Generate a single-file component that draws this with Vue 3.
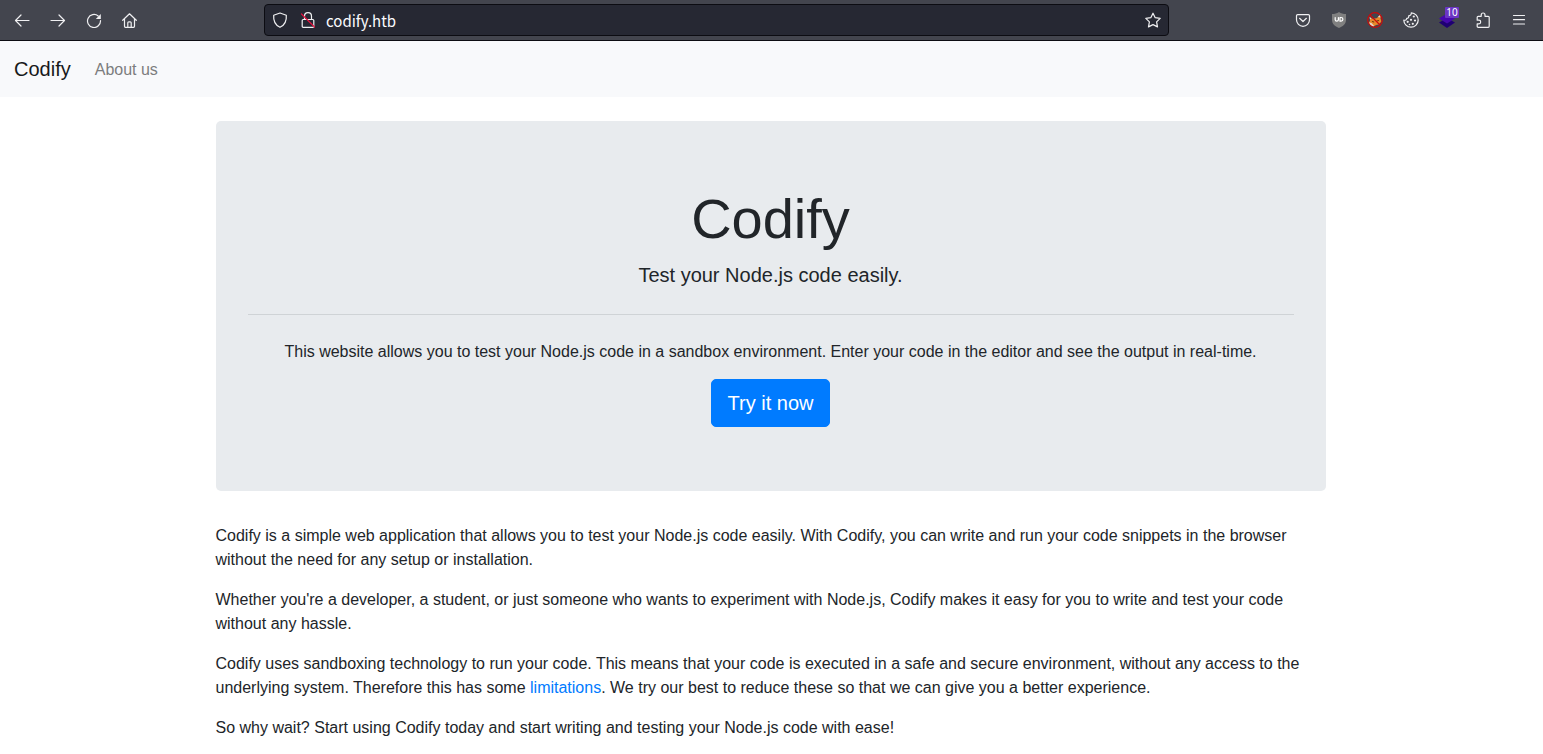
<template>
  <div class="page">
    <header class="toolbar">
      <div class="tools">
        <button type="button" aria-label="Back">
          <svg viewBox="0 0 16 16"><path d="M15 8.500H1.500M7 3 1.500 8.500 7 14" /></svg>
        </button>
        <button type="button" aria-label="Forward">
          <svg viewBox="0 0 16 16"><path d="M1 8.500h13.500M9 3l5.500 5.500L9 14" /></svg>
        </button>
        <button type="button" aria-label="Reload">
          <svg viewBox="0 0 16 16">
            <path d="M14.500 8.500A6.500 6.500 0 1 1 12.200 4" />
            <path class="solid" d="M14.800 2v5h-5z" />
          </svg>
        </button>
        <button type="button" aria-label="Home">
          <svg viewBox="0 0 16 16">
            <path d="M.7 8.300 7.500 1.800l6.800 6.500M2.500 7v7.300q0 1 1 1h8q1 0 1-1V7M5.800 15v-4.200q0-1 1-1h1.400q1 0 1 1V15" />
          </svg>
        </button>
      </div>

      <div class="urlbar">
        <svg viewBox="0 0 16 16">
          <path d="M8 1 14.300 3.200c.5 5.800-1.300 9.700-6.300 12.100C3 12.900 1.200 9 1.700 3.200z" />
        </svg>
        <svg class="lock" viewBox="0 0 16 16">
          <path d="M4.500 7.500V4.200a3.500 3.500 0 0 1 7 0v3.300M3.200 7.500h9.600q1 0 1 1v5.800q0 1-1 1H3.200q-1 0-1-1V8.500q0-1 1-1z" />
          <path class="slash" d="M1.500 2 14.500 15" />
        </svg>
        <input v-model="url" type="text" aria-label="Address" spellcheck="false" />
        <button type="button" class="star" aria-label="Bookmark this page">
          <svg viewBox="0 0 16 16">
            <path d="m8 1.200 2.200 4.500 5 .7-3.600 3.500.9 5L8 12.600l-4.500 2.300.9-5L.8 6.400l5-.7z" />
          </svg>
        </button>
      </div>

      <div class="tools">
        <button type="button" aria-label="Save to Pocket">
          <svg viewBox="0 0 16 16">
            <path d="M2.700 2.600h10.600q1.200 0 1.200 1.200v4a6.500 6.500 0 0 1-13 0v-4q0-1.200 1.200-1.200z" />
            <path d="M4.600 6.300 8 9.500l3.400-3.200" />
          </svg>
        </button>
        <button type="button" aria-label="Ad blocker">
          <svg viewBox="0 0 16 16">
            <path class="shield" d="M8 0c2 1.400 4.300 2 7 2v6c0 3.800-2.800 6.200-7 8-4.200-1.800-7-4.200-7-8V2c2.700 0 5-.6 7-2z" />
            <path class="shield-mark" d="M4.200 5.500v2.300q0 1.400 1.600 1.400t1.600-1.400V5.500M9 5.500h1q1.900 0 1.900 1.800T10 9.200H9z" />
          </svg>
        </button>
        <button type="button" aria-label="Proxy switcher">
          <svg viewBox="0 0 16 16">
            <path class="fox" d="m3 5.500 2.500 1.300 4-.6L13.500 3v3.500l1 3-2.800 3-2.700.5-2.300 1.500-3-1L2 10.800l1-2.300z" />
            <path class="fox-light" d="m2 10.500 2.500.5 2.500 2.700-.5 1-3-1.200zM10.800 5 13.500 2.500l-.2 3zM2.500 5l2 1.300-1.500 1.200z" />
            <path class="fox-dark" d="m5.500 9.500 1.200.5M10 9l1.500-.5" />
            <circle class="ban" cx="8" cy="8" r="7.300" />
            <path class="ban" d="m3 3 10 10" />
          </svg>
        </button>
        <button type="button" aria-label="Cookie editor">
          <svg viewBox="0 0 16 16">
            <path d="M8.300.8a7.200 7.200 0 1 1-7.500 7.400c1.700.3 2.900-.5 2.900-1.900C5.300 6.200 6 5.100 5.700 3.900 7.500 3.700 8.500 2.400 8.300.8z" />
            <g class="solid">
              <circle cx="10.800" cy="4.500" r="1.100" />
              <circle cx="8" cy="7.800" r="1.100" />
              <circle cx="12" cy="8.500" r="1.100" />
              <circle cx="4.700" cy="9.800" r="1.100" />
              <circle cx="9.800" cy="11.800" r="1.100" />
              <circle cx="6.500" cy="12.500" r=".8" />
            </g>
          </svg>
        </button>
        <button type="button" class="has-badge" aria-label="Technology profiler">
          <svg viewBox="0 0 16 16">
            <path class="layer-low" d="m0 10.500 8-4.500 8 4.500L8 16z" />
            <path class="layer-top" d="m0 6.500 8-5 8 5-8 5z" />
          </svg>
          <span class="badge">10</span>
        </button>
        <button type="button" aria-label="Extensions">
          <svg viewBox="0 0 16 16">
            <path d="M2.200 5.300q0-1 1-1h3V2.900a1.900 1.900 0 0 1 3.800 0v1.400h3.200q1 0 1 1v9q0 1-1 1h-10q-1 0-1-1v-2.500h1.700a1.800 1.800 0 0 0 0-3.600H2.200z" />
          </svg>
        </button>
        <button type="button" aria-label="Menu">
          <svg viewBox="0 0 16 16"><path d="M2.500 3.500h11M2.500 7.700h11M2.500 12h11" /></svg>
        </button>
      </div>
    </header>

    <nav class="navbar">
      <a href="#" class="brand">Codify</a>
      <a href="#about" class="nav-link">About us</a>
    </nav>

    <main class="container">
      <section class="jumbotron">
        <h1>Codify</h1>
        <p class="lead">Test your Node.js code easily.</p>
        <hr />
        <p>
          This website allows you to test your Node.js code in a sandbox environment. Enter your
          code in the editor and see the output in real-time.
        </p>
        <a href="#editor" class="btn">Try it now</a>
      </section>

      <p>
        Codify is a simple web application that allows you to test your Node.js code easily. With
        Codify, you can write and run your code snippets in the browser without the need for any
        setup or installation.
      </p>
      <p>
        Whether you're a developer, a student, or just someone who wants to experiment with
        Node.js, Codify makes it easy for you to write and test your code without any hassle.
      </p>
      <p>
        Codify uses sandboxing technology to run your code. This means that your code is executed
        in a safe and secure environment, without any access to the underlying system. Therefore
        this has some <a href="#limitations">limitations</a>. We try our best to reduce these so
        that we can give you a better experience.
      </p>
      <p>
        So why wait? Start using Codify today and start writing and testing your Node.js code with
        ease!
      </p>
    </main>
  </div>
</template>

<script setup>
import { ref } from "vue";

const url = ref("codify.htb");
</script>

<style>
body {
  margin: 0;
  background: #fff;
}
</style>

<style scoped>
.page,
.page * {
  box-sizing: border-box;
}

.page {
  color: #212529;
  font-family: "Liberation Sans", Arial, sans-serif;
  font-size: 16px;
  line-height: 24px;
}

/* Browser toolbar */
.toolbar {
  display: flex;
  align-items: center;
  height: 41px;
  padding: 0 6px 0 4px;
  background: #43454e;
  border-bottom: 1px solid #0c0c12;
}

.tools {
  display: flex;
}

.toolbar button {
  display: flex;
  align-items: center;
  justify-content: center;
  width: 36px;
  height: 32px;
  padding: 0;
  border: 0;
  background: none;
  cursor: pointer;
}

.toolbar svg {
  flex: none;
  width: 16px;
  height: 16px;
  fill: none;
  stroke: #f0f0f2;
  stroke-width: 1.2;
  stroke-linecap: round;
  stroke-linejoin: round;
}

.toolbar .solid {
  fill: #f0f0f2;
  stroke: none;
}

.urlbar {
  display: flex;
  flex: 1;
  align-items: center;
  min-width: 0;
  height: 32px;
  margin: 0 116px;
  padding-left: 7px;
  background: #262833;
  border: 1px solid #0c0c12;
  border-radius: 4px;
}

.urlbar .lock {
  margin: 0 10px 0 12px;
}

.urlbar input {
  flex: 1;
  min-width: 0;
  height: 28px;
  padding: 0;
  border: 0;
  outline: 0;
  background: transparent;
  color: #fbfbfe;
  font-family: "Noto Sans CJK SC", "Noto Sans", sans-serif;
  font-size: 15px;
}

.toolbar .star {
  width: 30px;
}

.toolbar .slash {
  stroke: #e2123f;
}

.toolbar .shield {
  fill: #808080;
  stroke: none;
}

.toolbar .shield-mark {
  stroke: #fff;
}

.toolbar .fox {
  fill: #e8892b;
  stroke: none;
}

.toolbar .fox-light {
  fill: #e6d8cc;
  stroke: none;
}

.toolbar .fox-dark {
  stroke: #713b12;
}

.toolbar .ban {
  stroke: #cc0a0a;
}

.toolbar .layer-low {
  fill: #1f0073;
  stroke: none;
}

.toolbar .layer-top {
  fill: #4608ad;
  stroke: none;
}

.has-badge {
  position: relative;
}

.badge {
  position: absolute;
  top: 3px;
  right: 6px;
  width: 14px;
  height: 11px;
  background: #6b35c4;
  border-radius: 1px;
  color: #fff;
  font-family: "Noto Sans", sans-serif;
  font-size: 10px;
  line-height: 11px;
  text-align: center;
}

/* Site navigation */
.navbar {
  display: flex;
  align-items: center;
  gap: 24px;
  height: 56px;
  padding: 0 14px;
  background: #f8f9fb;
}

.brand {
  color: #18191a;
  font-size: 20px;
  line-height: 30px;
  text-decoration: none;
}

.nav-link {
  padding-top: 2px;
  color: #7c7d7e;
  text-decoration: none;
}

.container {
  max-width: 1140px;
  margin: 24px auto 0;
  padding: 0 16px 0 14px;
}

.container p {
  margin: 0 0 15px;
  padding-top: 1px;
}

.container a {
  color: #007bff;
  text-decoration: none;
}

.container .jumbotron {
  margin-bottom: 32px;
  padding: 64px 32px;
  background: #e8ebee;
  border-radius: 5px;
  text-align: center;
}

.jumbotron h1 {
  margin: 0 0 8px;
  font-size: 56px;
  font-weight: 300;
  line-height: 67px;
}

.jumbotron .lead {
  margin: 0;
  padding: 0;
  font-size: 20px;
  line-height: 30px;
}

.jumbotron hr {
  margin: 24px 0;
  border: 0;
  border-top: 1px solid #cfd3d6;
}

.jumbotron .btn {
  display: block;
  width: fit-content;
  margin: 0 auto;
  padding: 8px 16px;
  background: #007bff;
  border: 1px solid #007bff;
  border-radius: 5px;
  color: #fff;
  font-size: 20px;
  line-height: 30px;
}
</style>
